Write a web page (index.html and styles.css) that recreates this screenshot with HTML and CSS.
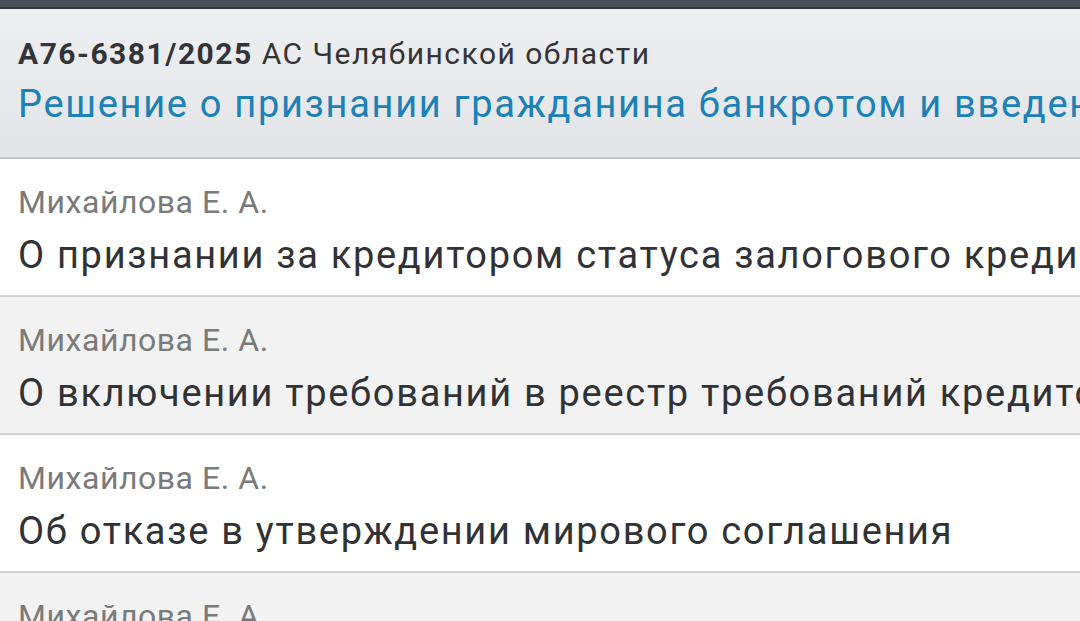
FILE: index.html
```html
<!DOCTYPE html>
<html lang="ru">
<head>
<meta charset="utf-8">
<title>Дело А76-6381/2025</title>
<link rel="stylesheet" href="styles.css">
</head>
<body>
<div class="topbar"></div>
<header class="case-header">
  <div class="case-line"><b class="case-num">А76-6381/2025</b> АС Челябинской области</div>
  <div class="case-title">Решение о признании гражданина банкротом и введении процедуры реализации имущества</div>
</header>
<ul class="acts">
  <li class="act">
    <div class="judge">Михайлова Е. А.</div>
    <div class="act-title">О признании за кредитором статуса залогового кредитора</div>
  </li>
  <li class="act alt">
    <div class="judge">Михайлова Е. А.</div>
    <div class="act-title">О включении требований в реестр требований кредиторов</div>
  </li>
  <li class="act">
    <div class="judge">Михайлова Е. А.</div>
    <div class="act-title">Об отказе в утверждении мирового соглашения</div>
  </li>
  <li class="act alt">
    <div class="judge">Михайлова Е. А.</div>
    <div class="act-title">О продлении срока реализации имущества гражданина</div>
  </li>
</ul>
</body>
</html>
```

FILE: styles.css
```css
* { box-sizing: border-box; }
html, body {
  margin: 0;
  padding: 0;
  width: 1080px;
  height: 621px;
  overflow: hidden;
  background: #ffffff;
  font-family: Roboto, "Noto Sans", "Liberation Sans", sans-serif;
}
.topbar {
  height: 9px;
  background: #4b4f5a;
  border-bottom: 2px solid #33363d;
}
.case-header {
  display: flex;
  flex-direction: column;
  gap: 2px;
  padding: 25px 18px 25px;
  background: linear-gradient(#eeeff1, #e2e4e7);
  border-bottom: 2px solid #c3c4c6;
  white-space: nowrap;
  overflow: hidden;
}
.case-line {
  font-size: 30px;
  line-height: 40px;
  letter-spacing: 1.5px;
  color: #333438;
}
.case-num { font-weight: 700; }
.case-title {
  font-size: 38px;
  line-height: 56px;
  letter-spacing: 1.7px;
  color: #1b81b6;
}
.acts {
  list-style: none;
  margin: 0;
  padding: 0;
}
.act {
  display: flex;
  flex-direction: column;
  gap: 5px;
  padding: 23px 18px 12px;
  background: #ffffff;
  border-bottom: 2px solid #d3d3d3;
  white-space: nowrap;
  overflow: hidden;
}
.act.alt { background: #f2f2f2; }
.judge {
  font-size: 32px;
  line-height: 40px;
  letter-spacing: 0.55px;
  color: #7a7a7a;
}
.act-title {
  font-size: 38px;
  line-height: 56px;
  letter-spacing: 1.7px;
  color: #313236;
}
```
